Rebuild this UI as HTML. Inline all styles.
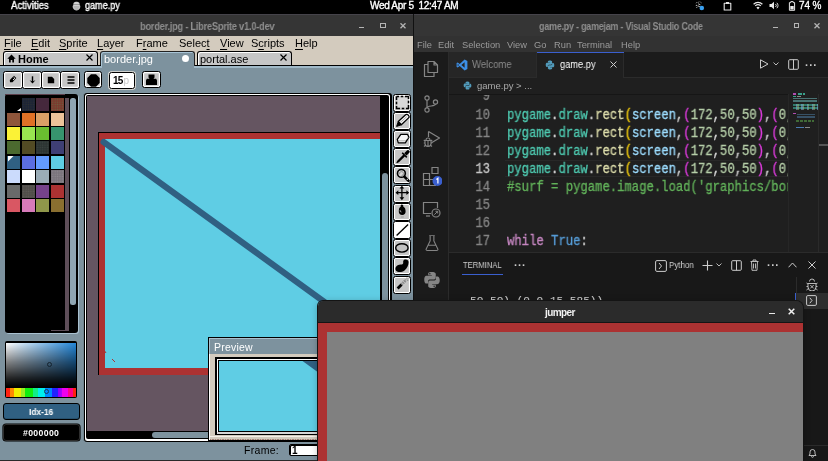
<!DOCTYPE html>
<html><head><meta charset="utf-8">
<style>
*{margin:0;padding:0;box-sizing:border-box}
html,body{width:828px;height:461px;overflow:hidden;background:#000;font-family:"Liberation Sans",sans-serif}
.a{position:absolute}
.t{position:absolute;white-space:nowrap;line-height:1;will-change:transform}
/* gnome */
#top{left:0;top:0;width:828px;height:14px;background:#000}
/* libresprite */
#ls{left:0;top:14px;width:414px;height:447px;background:#7d929e;overflow:hidden}
.hb{background:#303030}
.menu{font-size:11px;color:#000}
.tabt{font-size:11px;color:#000}
.menu u{text-decoration:underline;text-underline-offset:1.5px}
.btn{position:absolute;background:#c6c6c6;border:1px solid #000;border-bottom-width:1.8px;border-radius:2.5px;box-shadow:inset 0 0 0 1.2px #fff}
.tool{position:absolute;left:392.9px;width:18.6px;height:18px;background:#c6c6c6;border:1px solid #000;border-bottom-width:1.5px;border-radius:2.5px;box-shadow:inset 0 0 0 1.1px #fff}
/* vscode */
#vs{left:414px;top:14px;width:414px;height:447px;background:#1f1f1f;overflow:hidden}
.vm{font-size:9.3px;color:#9a9a9a;top:41px}
.code{font-family:"Liberation Mono",monospace;font-size:13px;line-height:18px;transform:scale(0.941,1.1);transform-origin:0 0;-webkit-text-stroke:0.3px currentColor}
</style></head><body>

<!-- GNOME top bar -->
<div id="top" class="a">
  <div class="t" style="left:11px;top:1px;font-size:10px;color:#fff;-webkit-text-stroke:0.35px #fff;transform:scaleX(0.955);transform-origin:0 0">Activities</div>
  <div class="t" style="left:84.8px;top:0.8px;font-size:10px;color:#fff;-webkit-text-stroke:0.35px #fff;transform:scaleX(0.91);transform-origin:0 0">game.py</div>
  <div class="t" style="left:370.4px;top:1.3px;font-size:10px;color:#fff;-webkit-text-stroke:0.35px #fff;letter-spacing:-0.32px">Wed Apr 5&nbsp;&nbsp;12:47 AM</div>

  <svg class="a" style="left:71.5px;top:1px" width="9" height="10" viewBox="0 0 9 10"><path d="M2 1.5C3 0.5 6 0.5 7 1.5C8 2.5 7.5 3.5 7.5 4C8.5 4.5 8.5 6 8 7C7.5 8.5 6 9.5 4.5 9.5C3 9.5 1.5 8.5 1 7C0.5 6 0.5 4.5 1.5 4C1.5 3.5 1 2.5 2 1.5Z" fill="#d0d0d0"/><path d="M2 3.5H7M1.5 6H7.5M2.5 8H6.5" stroke="#777" stroke-width="0.6"/></svg>
  <svg class="a" style="left:695px;top:0.5px" width="10" height="10" viewBox="0 0 10 10"><path d="M1.2 2.2L2.2 1.2M3.6 1.4L4 0.6M5.6 1.2L6.4 1.8M0.8 4.6L2 4.2M1.4 6.6L2.4 6.1M3.2 2.8L5.4 3.8M2.6 4.8L4.8 5.6" stroke="#c8c8c8" stroke-width="1"/><circle cx="6.8" cy="7" r="2.3" fill="#3aa0f0"/></svg>
  <svg class="a" style="left:722.5px;top:0.5px" width="9" height="10" viewBox="0 0 9 10"><path d="M1.2 2.3H7.8V9H1.2Z" stroke="#e6e6e6" stroke-width="1.1" fill="none" stroke-linejoin="round"/><path d="M3 1H6V3H3Z" fill="#e6e6e6"/></svg>
  <svg class="a" style="left:752.5px;top:1px" width="10" height="9" viewBox="0 0 10 9"><path d="M0.6 3.2A6.4 6.4 0 0 1 9.4 3.2M2.2 4.9A4.2 4.2 0 0 1 7.8 4.9" stroke="#e8e8e8" stroke-width="1.2" fill="none"/><path d="M5 8.6L3.4 6.5A2.2 2.2 0 0 1 6.6 6.5Z" fill="#e8e8e8"/></svg>
  <svg class="a" style="left:769px;top:1px" width="10" height="9" viewBox="0 0 10 9"><path d="M0.5 3H2.5L5 0.8V8.2L2.5 6H0.5Z" fill="#e8e8e8"/><path d="M6.5 3A2 2 0 0 1 6.5 6M7.8 1.8A3.6 3.6 0 0 1 7.8 7.2" stroke="#e8e8e8" stroke-width="0.9" fill="none"/></svg>
  <svg class="a" style="left:787.5px;top:0.5px" width="8" height="10" viewBox="0 0 8 10"><path d="M2.8 0.6H5.2V1.6H6.6V9.3H1.4V1.6H2.8Z" stroke="#e8e8e8" stroke-width="1" fill="none" stroke-linejoin="round"/><rect x="2.3" y="5" width="3.4" height="3.5" fill="#e8e8e8"/></svg>
  <div class="t" style="left:799px;top:1.2px;font-size:10px;color:#fff;letter-spacing:-0.1px;-webkit-text-stroke:0.3px #fff">74 %</div>
</div>


<!-- LibreSprite window -->
<div class="a" style="left:0;top:14px;width:413px;height:22px;background:#353535"></div>
<div class="a" style="left:0;top:14.3px;width:413px;height:1.2px;background:#45434a"></div>
<div class="t" style="left:140px;top:21px;font-size:10.6px;font-weight:bold;color:#8e8e8e;letter-spacing:-0.3px;transform:scaleX(0.88);transform-origin:0 0">border.jpg - LibreSprite v1.0-dev</div>
<div class="a" style="left:359px;top:27px;width:5px;height:1.3px;background:#b5b5b5"></div>
<div class="a" style="left:380px;top:23px;width:5.5px;height:5px;border:1.6px solid #b5b5b5"></div>
<svg class="a" style="left:400px;top:23px" width="6" height="5.5" viewBox="0 0 6 5.5"><path d="M0.5 0.3L5.5 5.2M5.5 0.3L0.5 5.2" stroke="#b5b5b5" stroke-width="1.3"/></svg>
<div class="a" style="left:413px;top:14px;width:1px;height:447px;background:#111"></div>
<div class="a" style="left:0;top:36px;width:413px;height:29px;background:#d3cbbe"></div>
<div class="t menu" style="left:3.5px;top:38.4px"><u>F</u>ile</div>
<div class="t menu" style="left:30.5px;top:38.4px"><u>E</u>dit</div>
<div class="t menu" style="left:58.5px;top:38.4px"><u>S</u>prite</div>
<div class="t menu" style="left:96.5px;top:38.4px"><u>L</u>ayer</div>
<div class="t menu" style="left:135.5px;top:38.4px">F<u>r</u>ame</div>
<div class="t menu" style="left:178.5px;top:38.4px">Selec<u>t</u></div>
<div class="t menu" style="left:219.5px;top:38.4px"><u>V</u>iew</div>
<div class="t menu" style="left:250.5px;top:38.4px">S<u>c</u>ripts</div>
<div class="t menu" style="left:294.5px;top:38.4px"><u>H</u>elp</div>
<!-- workspace -->
<div class="a" style="left:0;top:65px;width:413px;height:395px;background:#7d929e"></div>
<div class="a" style="left:0;top:460px;width:414px;height:1px;background:#2a2a2a"></div>
<!-- tabs -->
<div class="a" style="left:3px;top:51px;width:95px;height:15px;background:#c6c6c6;border:1px solid #000;border-bottom:none;border-radius:3px 3px 0 0;box-shadow:inset 1px 1px 0 #fff"></div>
<svg class="a" style="left:7px;top:54px" width="9" height="9" viewBox="0 0 9 9"><path d="M4.5 0.5L8.7 4.7H7V8.5H5.3V6H3.7V8.5H2V4.7H0.3Z" fill="#000"/></svg>
<div class="t tabt" style="left:18px;top:54px;font-weight:bold">Home</div>
<svg class="a" style="left:86px;top:54px" width="7" height="7" viewBox="0 0 7 7"><path d="M0.5 0.5L6.5 6.5M6.5 0.5L0.5 6.5" stroke="#000" stroke-width="1.2"/></svg>
<div class="a" style="left:100px;top:51px;width:95px;height:16px;background:#7d929e;border:1px solid #222;border-bottom:none;border-radius:3px 3px 0 0;box-shadow:inset 1px 1px 0 #a8c4d6"></div>
<div class="t tabt" style="left:104px;top:54px;color:#fff">border.jpg</div>
<div class="a" style="left:182px;top:55px;width:7px;height:7px;border-radius:50%;background:#fff"></div>
<div class="a" style="left:197px;top:51px;width:95px;height:15px;background:#c6c6c6;border:1px solid #000;border-bottom:none;border-radius:3px 3px 0 0;box-shadow:inset 1px 1px 0 #fff"></div>
<div class="t tabt" style="left:200px;top:54px">portal.ase</div>
<svg class="a" style="left:280px;top:54px" width="7" height="7" viewBox="0 0 7 7"><path d="M0.5 0.5L6.5 6.5M6.5 0.5L0.5 6.5" stroke="#000" stroke-width="1.2"/></svg>
<div class="a" style="left:0;top:64.8px;width:100.5px;height:1.2px;background:#000"></div>
<div class="a" style="left:194.5px;top:64.8px;width:218.5px;height:1.2px;background:#000"></div>
<div class="a" style="left:0;top:66.2px;width:101.5px;height:1.5px;background:#a0b9c8"></div>
<div class="a" style="left:193.5px;top:66.2px;width:219.5px;height:1.5px;background:#a0b9c8"></div>
<!-- toolbar buttons -->
<div class="btn" style="left:3px;top:71px;width:20px;height:18px"></div>
<div class="btn" style="left:22px;top:71px;width:20px;height:18px"></div>
<div class="btn" style="left:41px;top:71px;width:20px;height:18px"></div>
<div class="btn" style="left:60px;top:71px;width:20px;height:18px"></div>
<svg class="a" style="left:9px;top:75px" width="8" height="8" viewBox="0 0 8 8"><path d="M5 0.8L7.3 3L3.5 7.2H1L0.8 5Z" fill="#000"/><path d="M4.6 2.2L5.8 3.3L4 5" stroke="#fff" stroke-width="0.9" fill="none"/></svg>
<svg class="a" style="left:28.5px;top:76px" width="7" height="8" viewBox="0 0 7 8"><path d="M3.5 0.3V6.5" stroke="#000" stroke-width="1.4"/><path d="M0.6 4.2L3.5 7.6L6.4 4.2L3.5 5.6Z" fill="#000"/></svg>
<svg class="a" style="left:47px;top:76px" width="8" height="8" viewBox="0 0 8 8"><path d="M0.8 0.8H5L7.2 3V7.2H0.8Z" fill="#000"/></svg>
<svg class="a" style="left:67px;top:76px" width="8" height="8" viewBox="0 0 8 8"><path d="M0.5 1H7.5M0.5 4H7.5M0.5 7H7.5" stroke="#000" stroke-width="1.3"/></svg>
<div class="btn" style="left:84px;top:71px;width:18px;height:17px"></div>
<svg class="a" style="left:86.8px;top:73.5px" width="13" height="13" viewBox="0 0 13 13"><path d="M4 0.3H9L12.7 4V9L9 12.7H4L0.3 9V4Z" fill="#000"/></svg>
<div class="a" style="left:109.3px;top:72.2px;width:25.6px;height:16.4px;background:#fff;border:1.6px solid #000;border-radius:2.5px;box-shadow:0 0 0 0.8px #e8e4dc"></div>
<div class="t" style="left:112.5px;top:76.3px;font-size:10px;font-weight:bold;color:#000;letter-spacing:-0.8px">15<span style="color:#c8c8c8;font-weight:normal;margin-left:1px">p</span></div>
<div class="btn" style="left:142px;top:71px;width:19px;height:17px"></div>
<svg class="a" style="left:145px;top:74px" width="13" height="12" viewBox="0 0 13 12"><path d="M3.5 0.6H9.5V3.6L8.5 4.8H11.2L12 6.5V11H1V6.5L1.8 4.8H4.5L3.5 3.6Z" fill="#000"/></svg>
<!-- palette panel -->
<div class="a" style="left:4.5px;top:93.8px;width:73px;height:239.5px;background:#000;border-radius:3px;box-shadow:1px 1px 0 #a9c1d0"></div>
<div class="a" style="left:4.5px;top:93.8px;width:60px;height:1px;background:#5b3f4b"></div>
<div class="a" style="left:7.0px;top:98.0px;width:13.2px;height:13.2px;background:#000000"></div>
<div class="a" style="left:22.0px;top:98.0px;width:13.2px;height:13.2px;background:#1c2436 radial-gradient(circle, #2e3030 0.5px, transparent 0.9px) 0.6px 0.6px/2.4px 2.4px"></div>
<div class="a" style="left:36.3px;top:98.0px;width:13.2px;height:13.2px;background:#45283c"></div>
<div class="a" style="left:50.8px;top:98.0px;width:13.2px;height:13.2px;background:#7c3a2e radial-gradient(circle, #6a6040 0.5px, transparent 0.9px) 0.6px 0.6px/2.4px 2.4px"></div>
<div class="a" style="left:7.0px;top:112.5px;width:13.2px;height:13.2px;background:#8f563b"></div>
<div class="a" style="left:22.0px;top:112.5px;width:13.2px;height:13.2px;background:#df7126"></div>
<div class="a" style="left:36.3px;top:112.5px;width:13.2px;height:13.2px;background:#d9a066"></div>
<div class="a" style="left:50.8px;top:112.5px;width:13.2px;height:13.2px;background:#eec39a"></div>
<div class="a" style="left:7.0px;top:126.9px;width:13.2px;height:13.2px;background:#fbf236"></div>
<div class="a" style="left:22.0px;top:126.9px;width:13.2px;height:13.2px;background:#99e550"></div>
<div class="a" style="left:36.3px;top:126.9px;width:13.2px;height:13.2px;background:#6abe30"></div>
<div class="a" style="left:50.8px;top:126.9px;width:13.2px;height:13.2px;background:#37946e"></div>
<div class="a" style="left:7.0px;top:141.3px;width:13.2px;height:13.2px;background:#4b692f"></div>
<div class="a" style="left:22.0px;top:141.3px;width:13.2px;height:13.2px;background:#524b24"></div>
<div class="a" style="left:36.3px;top:141.3px;width:13.2px;height:13.2px;background:#2c3432 radial-gradient(circle, #3c4442 0.5px, transparent 0.9px) 0.6px 0.6px/2.4px 2.4px"></div>
<div class="a" style="left:50.8px;top:141.3px;width:13.2px;height:13.2px;background:#3f3f74"></div>
<div class="a" style="left:7.0px;top:155.8px;width:13.2px;height:13.2px;background:#306082"></div>
<div class="a" style="left:22.0px;top:155.8px;width:13.2px;height:13.2px;background:#5b6ee1"></div>
<div class="a" style="left:36.3px;top:155.8px;width:13.2px;height:13.2px;background:#639bff"></div>
<div class="a" style="left:50.8px;top:155.8px;width:13.2px;height:13.2px;background:#5fcde4"></div>
<div class="a" style="left:7.0px;top:170.2px;width:13.2px;height:13.2px;background:#cbdbfc"></div>
<div class="a" style="left:22.0px;top:170.2px;width:13.2px;height:13.2px;background:#ffffff"></div>
<div class="a" style="left:36.3px;top:170.2px;width:13.2px;height:13.2px;background:#9badb7"></div>
<div class="a" style="left:50.8px;top:170.2px;width:13.2px;height:13.2px;background:#7a747c radial-gradient(circle, #8e8990 0.5px, transparent 0.9px) 0.6px 0.6px/2.4px 2.4px"></div>
<div class="a" style="left:7.0px;top:184.7px;width:13.2px;height:13.2px;background:#696a6a"></div>
<div class="a" style="left:22.0px;top:184.7px;width:13.2px;height:13.2px;background:#504d49 radial-gradient(circle, #605d59 0.5px, transparent 0.9px) 0.6px 0.6px/2.4px 2.4px"></div>
<div class="a" style="left:36.3px;top:184.7px;width:13.2px;height:13.2px;background:#76428a"></div>
<div class="a" style="left:50.8px;top:184.7px;width:13.2px;height:13.2px;background:#ac3232"></div>
<div class="a" style="left:7.0px;top:199.1px;width:13.2px;height:13.2px;background:#d95763"></div>
<div class="a" style="left:22.0px;top:199.1px;width:13.2px;height:13.2px;background:#d77bba"></div>
<div class="a" style="left:36.3px;top:199.1px;width:13.2px;height:13.2px;background:#8f974a"></div>
<div class="a" style="left:50.8px;top:199.1px;width:13.2px;height:13.2px;background:#8a6f30"></div>
<div class="a" style="left:17px;top:108px;width:4px;height:3px;background:#fff;clip-path:polygon(100% 0,100% 100%,0 100%)"></div>
<div class="a" style="left:7.5px;top:156px;width:6px;height:6px;background:#fff;clip-path:polygon(0 0,100% 0,0 100%)"></div>
<div class="a" style="left:65.3px;top:98px;width:3.4px;height:233.4px;background:#5e4e59"></div>
<div class="a" style="left:51px;top:329.6px;width:17.7px;height:1.8px;background:#5e4e59"></div>
<div class="a" style="left:70.2px;top:97.8px;width:6px;height:207px;background:#8fa5b2;border-radius:2.5px"></div>
<!-- color picker -->
<div class="a" style="left:4.5px;top:341px;width:72.5px;height:57px;background:#000;border-radius:2px"></div>
<div class="a" style="left:6px;top:342.5px;width:70px;height:44.5px;background:linear-gradient(to bottom, rgba(0,0,0,0) 0%, rgba(0,0,0,.5) 45%, rgba(0,0,0,.85) 80%, #000 100%), linear-gradient(to right, #fff, #2386d8)"></div>
<div class="a" style="left:6px;top:387.5px;width:70px;height:9.5px;background:linear-gradient(to right,#f21 0%,#f21 6%,#f80 6%,#f80 12%,#ee0 12%,#ee0 22%,#9e2 22%,#9e2 27%,#1e1 27%,#1e1 38%,#1e8 38%,#1e8 46%,#0ee 46%,#0ee 56%,#08f 56%,#08f 66%,#22f 66%,#22f 74%,#80f 74%,#a0f 80%,#e0e 80%,#e0e 88%,#f08 88%,#f08 96%,#f21 96%)"></div>
<div class="a" style="left:46.8px;top:361.6px;width:5px;height:5px;border:1px solid #15232e;border-radius:50%"></div>
<div class="a" style="left:43.5px;top:389px;width:5px;height:5px;border:1.2px solid #1a3a5a;border-radius:50%"></div>
<!-- idx / hex -->
<div class="a" style="left:3px;top:403px;width:76.5px;height:16.5px;background:#306082;border:1.3px solid #000;border-radius:3px;box-shadow:inset 0 -1px 0 #26506d"></div>
<div class="t" style="left:28.8px;top:408.3px;font-size:9px;font-weight:bold;color:#fff;letter-spacing:0px;transform:scaleX(0.93);transform-origin:0 0">Idx-16</div>
<div class="a" style="left:3px;top:424px;width:76.5px;height:17px;background:#000;border:1.3px solid #2e2e2e;border-radius:3px;box-shadow:0 0 0 0.6px #000"></div>
<div class="t" style="left:23px;top:429px;font-size:8.7px;font-weight:bold;color:#fff;letter-spacing:0.35px">#000000</div>
<div class="a" style="left:82.5px;top:94px;width:1px;height:347px;background:#71858f"></div>
<!-- canvas editor -->
<div class="a" style="left:84px;top:93px;width:307.5px;height:349px;background:#000;border-radius:3px"></div>
<div class="a" style="left:85px;top:94px;width:305.3px;height:347px;background:#fff;border-radius:2.5px"></div>
<div class="a" style="left:86.3px;top:95px;width:302.7px;height:344px;background:#000;border-radius:2px"></div>
<div class="a" style="left:87.4px;top:96.4px;width:293px;height:334.5px;background:#655561"></div>
<div class="a" style="left:382px;top:173px;width:6px;height:300px;background:#7d929e;border-radius:3px"></div>
<div class="a" style="left:151.5px;top:432.4px;width:240px;height:6px;background:#7d929e;border-radius:3px"></div>
<!-- sprite -->
<div class="a" style="left:87.4px;top:96.4px;width:293px;height:334.5px;overflow:hidden">
<div class="a" style="left:10.6px;top:35.6px;width:300px;height:243px;background:#000"></div>
<div class="a" style="left:11.6px;top:36.6px;width:300px;height:242px;background:#ac3232"></div>
<div class="a" style="left:17.6px;top:42.6px;width:290px;height:229px;background:#5fcde4"></div>
<svg class="a" style="left:-87.4px;top:-96.4px" width="413" height="461" viewBox="0 0 413 461"><path d="M103.6 142L330 306" stroke="#306082" stroke-width="6.2" stroke-linecap="round"/><path d="M104 350L106 353M112 359L115 362" stroke="#ac3232" stroke-width="1"/></svg>
</div>
<div class="tool" style="top:93.5px;background:#c6c6c6"></div>
<div class="tool" style="top:111.7px;background:#c6c6c6"></div>
<div class="tool" style="top:129.9px;background:#c6c6c6"></div>
<div class="tool" style="top:148.1px;background:#c6c6c6"></div>
<div class="tool" style="top:166.3px;background:#c6c6c6"></div>
<div class="tool" style="top:184.5px;background:#c6c6c6"></div>
<div class="tool" style="top:202.7px;background:#c6c6c6"></div>
<div class="tool" style="top:220.9px;background:#fff"></div>
<div class="tool" style="top:239.1px;background:#c6c6c6"></div>
<div class="tool" style="top:257.3px;background:#c6c6c6"></div>
<div class="tool" style="top:275.5px;background:#c6c6c6"></div>
<svg class="a" style="left:0;top:0" width="413" height="300" viewBox="0 0 413 300">
<!-- marquee -->
<rect x="397.5" y="97.5" width="10" height="10" fill="#d9d9d9"/>
<path d="M396.5 96.5H399M400.8 96.5H403.2M405 96.5H408.5V99M408.5 100.8V103.2M408.5 105V108.5H406M404.2 108.5H401.8M400 108.5H396.5V106M396.5 104.2V101.8M396.5 100V96.5" stroke="#000" stroke-width="1.5" fill="none"/>
<!-- pencil -->
<path d="M398.3 121.6L405.6 114.8A1.6 1.6 0 0 1 407.9 114.9L408.6 115.6A1.6 1.6 0 0 1 408.6 117.9L401.3 124.8Z" fill="#f4f4f4" stroke="#000" stroke-width="1.3" stroke-linejoin="round"/>
<path d="M398.3 121.6L401.3 124.8L396.6 126.4Z" fill="#000" stroke="#000" stroke-width="1" stroke-linejoin="round"/>
<path d="M400.2 122.6L406.8 116.6" stroke="#9a9a9a" stroke-width="0.8"/>
<!-- eraser -->
<path d="M397.3 139.3L400.8 134.4H407.6L408.9 137.2L405.3 142.9H398.3Z" fill="#f6f6f6" stroke="#000" stroke-width="1.3" stroke-linejoin="round"/>
<path d="M398.5 140.8H405.3L408.5 137.5" stroke="#a0a0a0" stroke-width="0.8" fill="none"/>
<!-- eyedropper -->
<path d="M404.2 153.2L407 150.5A1.4 1.4 0 0 1 409 150.5L409.3 150.8A1.4 1.4 0 0 1 409.3 152.8L406.5 155.5Z" fill="#000"/>
<path d="M402.2 152.8L406.8 157.4" stroke="#000" stroke-width="1.5"/>
<path d="M403.6 155.2L398.2 160.6L397 162.6L399 161.4L404.4 156Z" fill="#f0f0f0" stroke="#000" stroke-width="1.2" stroke-linejoin="round"/>
<!-- zoom -->
<circle cx="401.4" cy="173.4" r="3.9" fill="#d8d8d8" stroke="#000" stroke-width="1.6"/>
<path d="M399.6 174.2A2 2 0 1 1 401.6 175.6" stroke="#888" stroke-width="0.9" fill="none"/>
<path d="M404.4 176.6L408.6 180.8" stroke="#000" stroke-width="2.6" stroke-linecap="round"/>
<circle cx="407.3" cy="179.3" r="0.6" fill="#fff"/>
<!-- move -->
<path d="M401.9 187.5V198.5M396.8 192.7H407.8" stroke="#000" stroke-width="1.3"/>
<path d="M401.9 185.8L404.3 188.6H399.5ZM401.9 200.2L404.3 197.2H399.5ZM395.5 192.7L398.3 190.3V195.1ZM409.2 192.7L406.4 190.3V195.1Z" fill="#000"/>
<!-- bucket -->
<path d="M401.8 204.6C400.7 204.6 400.4 205.6 400.8 206.6C399 207.5 398.8 209.6 398.8 211.5C398.8 213.8 400 215 402.2 215C404.4 215 405.6 213.8 405.6 211.5C405.6 209.6 405.2 207.5 403.2 206.6C403.6 205.6 403 204.6 401.8 204.6Z" fill="#000"/>
<path d="M400.3 210.2A1.2 1.2 0 0 0 401.4 212" stroke="#fff" stroke-width="0.7" fill="none"/>
<path d="M400.8 217H403.8" stroke="#8a8a8a" stroke-width="0.7"/>
<!-- line -->
<path d="M396.6 235.4L408.1 224.5" stroke="#000" stroke-width="1.4"/>
<!-- ellipse -->
<ellipse cx="401.9" cy="247.9" rx="6.2" ry="4.2" fill="#c2c2c2" stroke="#000" stroke-width="1.4"/>
<!-- blob -->
<path d="M405 259.6C406.8 259.2 408.6 260.2 408.6 262.2C408.6 265 407 268.5 404.5 270.5C402.5 272 399.8 272.4 397.6 271.8C395.4 271.2 395 269.4 395.6 267.6C396.4 265.6 398.5 264.8 400.8 264.6C402.6 264.4 403.4 263.6 403.2 262.2C403 260.8 403.6 259.9 405 259.6Z" fill="#000"/>
<!-- spray -->
<path d="M396.6 287.4L400.6 283.4L402.6 285.4L398.6 289.4Z" fill="#000"/>
<path d="M400.6 283.4L404.4 279.6L406.4 281.6L402.6 285.4Z" fill="#8e8e8e"/>
<path d="M401.6 282.4L404.4 285.2M403 281L405.4 283.4" stroke="#d8d8d8" stroke-width="0.6"/>
<path d="M406.6 278H407.4M408.6 278H409.4M407.4 280.2H408.2M405.6 279.8H406.2" stroke="#222" stroke-width="0.7"/>
</svg>
<!-- preview window -->
<div class="a" style="left:207.5px;top:337px;width:120px;height:104px;background:#000"></div>
<div class="a" style="left:208.6px;top:338px;width:120px;height:101.5px;background:#d3cbbe;box-shadow:inset 1px 0 0 #fff"></div>
<div class="a" style="left:208.6px;top:338px;width:120px;height:15.5px;background:#7d929e;box-shadow:inset 1px 1px 0 #a9c1cf"></div>
<div class="t" style="left:214px;top:341.5px;font-size:10.5px;color:#fff;letter-spacing:0.2px">Preview</div>
<div class="a" style="left:209.5px;top:438.5px;width:120px;height:1.3px;background:repeating-linear-gradient(to right,#a08078 0 1.5px,#c8b8a8 1.5px 2.5px)"></div>
<div class="a" style="left:209.5px;top:435.5px;width:120px;height:1.2px;background:#f4f0ea"></div>
<div class="a" style="left:215.2px;top:357.4px;width:120px;height:77.8px;background:#000"></div>
<div class="a" style="left:216.5px;top:358.5px;width:120px;height:75.5px;background:#fff"></div>
<div class="a" style="left:218px;top:360px;width:120px;height:72px;background:#000"></div>
<div class="a" style="left:218.5px;top:360.9px;width:120px;height:70.2px;background:#5fcde4;overflow:hidden"><svg class="a" style="left:0;top:0" width="120" height="70"><path d="M83.5 0H120V26.5Z" fill="#306082"/></svg></div>
<div class="a" style="left:216.5px;top:432px;width:120px;height:2px;background:#d6d6d6"></div>
<!-- status -->
<div class="t" style="left:244px;top:444.5px;font-size:10.5px;color:#000;letter-spacing:0.3px">Frame:</div>
<div class="a" style="left:288.5px;top:444.3px;width:40px;height:12px;background:#fff;border:1.2px solid #000;border-radius:2px;box-shadow:inset 1px 1px 0 #000"></div>
<div class="t" style="left:291.8px;top:445.8px;font-size:10px;font-weight:bold;color:#000">1</div>
<div class="a" style="left:380.4px;top:96.4px;width:0;height:0"></div>

<!-- VS Code window -->
<div class="a" style="left:414px;top:14px;width:414px;height:22px;background:#353535"></div>
<div class="a" style="left:414px;top:14.3px;width:414px;height:1.2px;background:#45434a"></div>
<div class="t" style="left:539px;top:21px;font-size:10.6px;font-weight:bold;color:#8e8e8e;letter-spacing:-0.3px;transform:scaleX(0.85);transform-origin:0 0">game.py - gamejam - Visual Studio Code</div>
<div class="a" style="left:773px;top:27px;width:5px;height:1.3px;background:#b5b5b5"></div>
<div class="a" style="left:793.5px;top:23px;width:5.5px;height:5px;border:1.6px solid #b5b5b5"></div>
<svg class="a" style="left:814px;top:23px" width="6" height="5.5" viewBox="0 0 6 5.5"><path d="M0.5 0.3L5.5 5.2M5.5 0.3L0.5 5.2" stroke="#b5b5b5" stroke-width="1.3"/></svg>
<div class="a" style="left:414px;top:36px;width:414px;height:16px;background:#323232"></div>
<div class="t vm" style="left:416.8px">File</div>
<div class="t vm" style="left:438.3px">Edit</div>
<div class="t vm" style="left:461.8px">Selection</div>
<div class="t vm" style="left:506.8px">View</div>
<div class="t vm" style="left:533.8px">Go</div>
<div class="t vm" style="left:553.8px">Run</div>
<div class="t vm" style="left:576.8px">Terminal</div>
<div class="t vm" style="left:620.8px">Help</div>
<!-- body -->
<div class="a" style="left:414px;top:52px;width:414px;height:409px;background:#1f1f1f"></div>
<div class="a" style="left:414px;top:52px;width:34px;height:409px;background:#1b1b1b"></div>
<div class="a" style="left:447.5px;top:52px;width:1px;height:409px;background:#2b2b2b"></div>
<!-- tabs -->
<div class="a" style="left:448.5px;top:52px;width:380px;height:25px;background:#1b1b1b"></div>
<div class="a" style="left:448.5px;top:76.5px;width:380px;height:1px;background:#2b2b2b"></div>
<div class="a" style="left:448.5px;top:52px;width:88px;height:25px;background:#262626;border-right:1px solid #2b2b2b"></div>
<div class="a" style="left:536.5px;top:52px;width:87px;height:25.5px;background:#1f1f1f;border-right:1px solid #2b2b2b"></div>
<div class="a" style="left:536.5px;top:52px;width:87px;height:1px;background:#3a5fcf"></div>
<svg class="a" style="left:456px;top:59px" width="12" height="12" viewBox="0 0 12 12"><path d="M8.6 0.6L11.4 1.9V10.1L8.6 11.4L3.7 7L1.7 8.5L0.6 8V4L1.7 3.5L3.7 5Z M8.6 3.3L5.4 6L8.6 8.7Z M1.7 4.8V7.2L3 6Z" fill="#3d8fe6" fill-rule="evenodd"/></svg>
<div class="t" style="left:472px;top:60.3px;font-size:10.2px;color:#8b8b8b;transform:scaleX(0.94);transform-origin:0 0">Welcome</div>
<svg class="a" style="left:545px;top:59.5px" width="10" height="10" viewBox="0 0 10 10"><path d="M4.8 0.5C2.8 0.5 2.9 1.4 2.9 1.4V2.4H4.9V2.7H2.1C2.1 2.7 0.7 2.5 0.7 4.8C0.7 7 1.9 7 1.9 7H2.8V5.9C2.8 5.9 2.7 4.7 4 4.7H6C6 4.7 7.1 4.7 7.1 3.6V1.7C7.1 1.7 7.3 0.5 4.8 0.5Z" fill="#519aba"/><path d="M5.2 9.5C7.2 9.5 7.1 8.6 7.1 8.6V7.6H5.1V7.3H7.9C7.9 7.3 9.3 7.5 9.3 5.2C9.3 3 8.1 3 8.1 3H7.2V4.1C7.2 4.1 7.3 5.3 6 5.3H4C4 5.3 2.9 5.3 2.9 6.4V8.3C2.9 8.3 2.7 9.5 5.2 9.5Z" fill="#519aba"/></svg>
<div class="t" style="left:559.5px;top:60.3px;font-size:10.2px;color:#ffffff;transform:scaleX(0.91);transform-origin:0 0">game.py</div>
<svg class="a" style="left:609.5px;top:61px" width="7" height="7" viewBox="0 0 7 7"><path d="M0.5 0.5L6.5 6.5M6.5 0.5L0.5 6.5" stroke="#cccccc" stroke-width="1"/></svg>
<!-- editor actions -->
<svg class="a" style="left:759px;top:59px" width="10" height="10" viewBox="0 0 10 10"><path d="M1.5 0.8L9 5L1.5 9.2Z" stroke="#cccccc" stroke-width="1" fill="none"/></svg>
<svg class="a" style="left:773px;top:62px" width="6" height="4" viewBox="0 0 6 4"><path d="M0.5 0.5L3 3L5.5 0.5" stroke="#cccccc" stroke-width="0.9" fill="none"/></svg>
<svg class="a" style="left:787.5px;top:59px" width="11" height="11" viewBox="0 0 11 11"><rect x="0.7" y="0.7" width="9.6" height="9.6" rx="1" stroke="#cccccc" stroke-width="1" fill="none"/><path d="M5.5 0.7V10.3" stroke="#cccccc" stroke-width="1"/></svg>
<div class="t" style="left:805px;top:59.5px;font-size:11px;color:#cccccc;letter-spacing:0.5px;font-weight:bold">&middot;&middot;&middot;</div>
<!-- breadcrumb -->
<svg class="a" style="left:463px;top:80.5px" width="9" height="9" viewBox="0 0 10 10"><path d="M4.8 0.5C2.8 0.5 2.9 1.4 2.9 1.4V2.4H4.9V2.7H2.1C2.1 2.7 0.7 2.5 0.7 4.8C0.7 7 1.9 7 1.9 7H2.8V5.9C2.8 5.9 2.7 4.7 4 4.7H6C6 4.7 7.1 4.7 7.1 3.6V1.7C7.1 1.7 7.3 0.5 4.8 0.5Z" fill="#519aba"/><path d="M5.2 9.5C7.2 9.5 7.1 8.6 7.1 8.6V7.6H5.1V7.3H7.9C7.9 7.3 9.3 7.5 9.3 5.2C9.3 3 8.1 3 8.1 3H7.2V4.1C7.2 4.1 7.3 5.3 6 5.3H4C4 5.3 2.9 5.3 2.9 6.4V8.3C2.9 8.3 2.7 9.5 5.2 9.5Z" fill="#519aba"/></svg>
<div class="t" style="left:476.5px;top:81px;font-size:9.5px;color:#a9a9a9">game.py&nbsp;&gt;&nbsp;...</div>
<!-- code -->
<div class="a" style="left:448.5px;top:94px;width:339px;height:158px;overflow:hidden">
<div class="a" style="left:-448.5px;top:-94px;width:828px;height:461px">
<div class="a" style="left:505px;top:159.5px;width:283px;height:17px;border-top:1px solid #282828;border-bottom:1px solid #282828"></div>
<div class="t code" style="left:469.5px;top:87.4px;width:20px;text-align:right;transform-origin:100% 0;color:#858585">9</div>
<div class="t code" style="left:469.5px;top:105.5px;width:20px;text-align:right;transform-origin:100% 0;color:#858585">10</div><div class="t code" style="left:507.3px;top:105.5px"><span style="color:#4ec9b0">pygame</span><span style="color:#d4d4d4">.</span><span style="color:#4ec9b0">draw</span><span style="color:#d4d4d4">.</span><span style="color:#dcdcaa">rect</span><span style="color:#ffd60a">(</span><span style="color:#9cdcfe">screen</span><span style="color:#d4d4d4">,</span><span style="color:#e23ce2">(</span><span style="color:#b5cea8">172</span><span style="color:#d4d4d4">,</span><span style="color:#b5cea8">50</span><span style="color:#d4d4d4">,</span><span style="color:#b5cea8">50</span><span style="color:#e23ce2">)</span><span style="color:#d4d4d4">,</span><span style="color:#e23ce2">(</span><span style="color:#b5cea8">0</span><span style="color:#b5cea8">,0,0),(0,0,</span></div>
<div class="t code" style="left:469.5px;top:123.5px;width:20px;text-align:right;transform-origin:100% 0;color:#858585">11</div><div class="t code" style="left:507.3px;top:123.5px"><span style="color:#4ec9b0">pygame</span><span style="color:#d4d4d4">.</span><span style="color:#4ec9b0">draw</span><span style="color:#d4d4d4">.</span><span style="color:#dcdcaa">rect</span><span style="color:#ffd60a">(</span><span style="color:#9cdcfe">screen</span><span style="color:#d4d4d4">,</span><span style="color:#e23ce2">(</span><span style="color:#b5cea8">172</span><span style="color:#d4d4d4">,</span><span style="color:#b5cea8">50</span><span style="color:#d4d4d4">,</span><span style="color:#b5cea8">50</span><span style="color:#e23ce2">)</span><span style="color:#d4d4d4">,</span><span style="color:#e23ce2">(</span><span style="color:#b5cea8">0</span><span style="color:#b5cea8">,0,0),(0,0,</span></div>
<div class="t code" style="left:469.5px;top:141.6px;width:20px;text-align:right;transform-origin:100% 0;color:#858585">12</div><div class="t code" style="left:507.3px;top:141.6px"><span style="color:#4ec9b0">pygame</span><span style="color:#d4d4d4">.</span><span style="color:#4ec9b0">draw</span><span style="color:#d4d4d4">.</span><span style="color:#dcdcaa">rect</span><span style="color:#ffd60a">(</span><span style="color:#9cdcfe">screen</span><span style="color:#d4d4d4">,</span><span style="color:#e23ce2">(</span><span style="color:#b5cea8">172</span><span style="color:#d4d4d4">,</span><span style="color:#b5cea8">50</span><span style="color:#d4d4d4">,</span><span style="color:#b5cea8">50</span><span style="color:#e23ce2">)</span><span style="color:#d4d4d4">,</span><span style="color:#e23ce2">(</span><span style="color:#b5cea8">0</span><span style="color:#b5cea8">,0,0),(0,0,</span></div>
<div class="t code" style="left:469.5px;top:159.7px;width:20px;text-align:right;transform-origin:100% 0;color:#c6c6c6">13</div><div class="t code" style="left:507.3px;top:159.7px"><span style="color:#4ec9b0">pygame</span><span style="color:#d4d4d4">.</span><span style="color:#4ec9b0">draw</span><span style="color:#d4d4d4">.</span><span style="color:#dcdcaa">rect</span><span style="color:#ffd60a">(</span><span style="color:#9cdcfe">screen</span><span style="color:#d4d4d4">,</span><span style="color:#e23ce2">(</span><span style="color:#b5cea8">172</span><span style="color:#d4d4d4">,</span><span style="color:#b5cea8">50</span><span style="color:#d4d4d4">,</span><span style="color:#b5cea8">50</span><span style="color:#e23ce2">)</span><span style="color:#d4d4d4">,</span><span style="color:#e23ce2">(</span><span style="color:#b5cea8">0</span><span style="color:#b5cea8">,0,0),(0,0,</span></div>
<div class="t code" style="left:469.5px;top:177.7px;width:20px;text-align:right;transform-origin:100% 0;color:#858585">14</div><div class="t code" style="left:507.3px;top:177.7px"><span style="color:#62b25a">#surf = pygame.image.load('graphics/border.jpg')</span></div>
<div class="t code" style="left:469.5px;top:195.8px;width:20px;text-align:right;transform-origin:100% 0;color:#858585">15</div>
<div class="t code" style="left:469.5px;top:213.9px;width:20px;text-align:right;transform-origin:100% 0;color:#858585">16</div>
<div class="t code" style="left:469.5px;top:232.0px;width:20px;text-align:right;transform-origin:100% 0;color:#858585">17</div><div class="t code" style="left:507.3px;top:232.0px"><span style="color:#c586c0">while</span><span style="color:#d4d4d4"> </span><span style="color:#569cd6">True</span><span style="color:#d4d4d4">:</span></div>
</div></div>
<div class="a" style="left:448.5px;top:93.5px;width:339px;height:1px;background:#161616"></div>
<!-- minimap -->
<div class="a" style="left:787.5px;top:94px;width:1px;height:158px;background:#262626"></div>
<div class="a" style="left:817.8px;top:94px;width:10.2px;height:158px;background:#1f1f1f;border-left:1px solid #2a2a2a"></div>
<div class="a" style="left:818.5px;top:143.8px;width:9.5px;height:1.8px;background:#555"></div>
<div class="a" style="left:793.4px;top:93.4px;width:3px;height:1.3px;background:#b04cb0"></div>
<div class="a" style="left:797.5px;top:93.4px;width:4px;height:1.3px;background:#3aa08a"></div>
<div class="a" style="left:802.5px;top:93.4px;width:2px;height:1.3px;background:#3aa08a"></div>
<div class="a" style="left:793.4px;top:95.6px;width:3px;height:1.2px;background:#3aa08a"></div>
<div class="a" style="left:797px;top:95.6px;width:4px;height:1.2px;background:#888"></div>
<div class="a" style="left:793.4px;top:98px;width:24px;height:4.8px;background:repeating-linear-gradient(to bottom,rgba(90,150,150,.7) 0 1.2px,transparent 1.2px 1.6px)"></div>
<div class="a" style="left:793.4px;top:104px;width:24.2px;height:5.6px;background:repeating-linear-gradient(to bottom,rgba(58,160,138,.7) 0 1.1px,transparent 1.1px 1.4px)"></div>
<div class="a" style="left:793.4px;top:104px;width:24.2px;height:5.6px;background:repeating-linear-gradient(to right,transparent 0 2.5px,rgba(120,170,210,.6) 2.5px 4px,rgba(160,190,140,.5) 4px 5.5px);"></div>
<div class="a" style="left:793px;top:112.9px;width:3px;height:1.2px;background:#b04cb0"></div>
<div class="a" style="left:796.5px;top:113.5px;width:18px;height:4px;background:repeating-linear-gradient(to bottom,rgba(74,122,160,.55) 0 1.1px,transparent 1.1px 1.6px)"></div>
<div class="a" style="left:796px;top:119.8px;width:18px;height:2.4px;background:repeating-linear-gradient(to right,rgba(79,138,64,.7) 0 3px,transparent 3px 4px)"></div>
<div class="a" style="left:796px;top:126.6px;width:8px;height:1.6px;background:#4a7ab0"></div>
<div class="a" style="left:805px;top:126.6px;width:5px;height:1.2px;background:#888"></div>
<!-- panel -->
<div class="a" style="left:448.5px;top:251.5px;width:380px;height:1px;background:#2b2b2b"></div>
<div class="a" style="left:448.5px;top:252.5px;width:380px;height:209px;background:#181818"></div>
<div class="t" style="left:463px;top:260.5px;font-size:9px;color:#cccccc;transform:scaleX(0.85);transform-origin:0 0">TERMINAL</div>
<div class="a" style="left:462px;top:273.5px;width:41px;height:1px;background:#3a5fcf"></div>
<div class="t" style="left:513.5px;top:259.5px;font-size:11px;color:#cccccc;letter-spacing:0.3px;font-weight:bold">&middot;&middot;&middot;</div>
<svg class="a" style="left:654.5px;top:259.5px" width="12" height="12" viewBox="0 0 12 12"><rect x="0.6" y="0.6" width="10.8" height="10.8" rx="1.3" stroke="#cccccc" stroke-width="1" fill="none"/><path d="M4 3L6.5 6L4 9" stroke="#cccccc" stroke-width="1" fill="none"/></svg>
<div class="t" style="left:669px;top:260.5px;font-size:9.3px;color:#cccccc;transform:scaleX(0.86);transform-origin:0 0">Python</div>
<svg class="a" style="left:701.5px;top:259.5px" width="11" height="11" viewBox="0 0 11 11"><path d="M5.5 0.5V10.5M0.5 5.5H10.5" stroke="#cccccc" stroke-width="1.1"/></svg>
<svg class="a" style="left:715.5px;top:262.5px" width="6" height="4" viewBox="0 0 6 4"><path d="M0.5 0.5L3 3L5.5 0.5" stroke="#cccccc" stroke-width="0.9" fill="none"/></svg>
<svg class="a" style="left:731px;top:259.5px" width="11" height="11" viewBox="0 0 11 11"><rect x="0.7" y="0.7" width="9.6" height="9.6" rx="1" stroke="#cccccc" stroke-width="1" fill="none"/><path d="M5.5 0.7V10.3" stroke="#cccccc" stroke-width="1"/></svg>
<svg class="a" style="left:750px;top:259px" width="9" height="12" viewBox="0 0 9 12"><path d="M0.5 2.5H8.5M3 2.5V1H6V2.5M1.5 2.5L2 11.3H7L7.5 2.5M3.5 4.5V9.5M5.5 4.5V9.5" stroke="#cccccc" stroke-width="0.9" fill="none"/></svg>
<div class="t" style="left:767px;top:259.5px;font-size:11px;color:#cccccc;letter-spacing:0.5px;font-weight:bold">&middot;&middot;&middot;</div>
<svg class="a" style="left:788px;top:261.5px" width="9" height="6" viewBox="0 0 9 6"><path d="M0.5 5.3L4.5 1L8.5 5.3" stroke="#cccccc" stroke-width="1" fill="none"/></svg>
<svg class="a" style="left:807.5px;top:261px" width="8" height="8" viewBox="0 0 8 8"><path d="M0.5 0.5L7.5 7.5M7.5 0.5L0.5 7.5" stroke="#cccccc" stroke-width="1"/></svg>
<div class="a" style="left:795.5px;top:277px;width:1px;height:168px;background:#2b2b2b"></div>
<div class="a" style="left:796.5px;top:293px;width:32px;height:15.5px;background:#2e2e2e"></div>
<div class="a" style="left:795.3px;top:293px;width:1.1px;height:15.5px;background:#3a5fcf"></div>
<svg class="a" style="left:805.5px;top:278px" width="12" height="13" viewBox="0 0 12 13"><path d="M3.5 3.5A2.5 2.5 0 0 1 8.5 3.5M2 5.5H10V9A4 4 0 0 1 2 9ZM0.5 5L2 6M11.5 5L10 6M0.5 8.5H2M10 8.5H11.5M0.5 12L2.3 10.5M11.5 12L9.7 10.5M4.3 7L7.7 10.4M7.7 7L4.3 10.4" stroke="#cccccc" stroke-width="0.9" fill="none"/></svg>
<svg class="a" style="left:806px;top:295px" width="11" height="11" viewBox="0 0 11 11"><rect x="0.6" y="0.6" width="9.8" height="9.8" rx="1.2" stroke="#cccccc" stroke-width="1" fill="none"/><path d="M3.8 2.8L6 5.5L3.8 8.2" stroke="#cccccc" stroke-width="1" fill="none"/></svg>
<div class="t code" style="left:469.5px;top:291.8px;font-size:11.1px;color:#cccccc;transform:none;-webkit-text-stroke:0.1px currentColor">50,50),(0,0,15,585))</div>
<!-- status bar -->
<div class="a" style="left:414px;top:445px;width:414px;height:1px;background:#2b2b2b"></div>
<div class="a" style="left:414px;top:446px;width:414px;height:15px;background:#181818"></div>
<svg class="a" style="left:807.5px;top:448px" width="9" height="10" viewBox="0 0 9 10"><path d="M1 7.5H8L7 6V4A2.5 2.5 0 0 0 2 4V6Z M3.5 8.3A1 1 0 0 0 5.5 8.3" stroke="#cccccc" stroke-width="0.9" fill="none"/></svg>
<!-- activity bar icons -->
<svg class="a" style="left:422px;top:59.5px" width="18" height="18" viewBox="0 0 18 18"><path d="M6 1.5H12L15.5 5V12.5H6Z M12 1.5V5H15.5" stroke="#858585" stroke-width="1.2" fill="none" stroke-linejoin="round"/><path d="M6 4.5H2.5V16.5H12V12.5" stroke="#858585" stroke-width="1.2" fill="none" stroke-linejoin="round"/></svg>
<svg class="a" style="left:423px;top:95px" width="16" height="18" viewBox="0 0 16 18"><circle cx="4" cy="3" r="2.1" stroke="#858585" stroke-width="1.2" fill="none"/><circle cx="4" cy="15" r="2.1" stroke="#858585" stroke-width="1.2" fill="none"/><circle cx="12.5" cy="7" r="2.1" stroke="#858585" stroke-width="1.2" fill="none"/><path d="M4 5.1V12.9M12.5 9.1C12.5 12 4 10 4 12.9" stroke="#858585" stroke-width="1.2" fill="none"/></svg>
<svg class="a" style="left:423px;top:130px" width="18" height="18" viewBox="0 0 18 18"><path d="M5.5 1.5L16.5 8L8.5 12.7" stroke="#858585" stroke-width="1.2" fill="none" stroke-linejoin="round"/><path d="M5.5 1.5V7" stroke="#858585" stroke-width="1.2"/><path d="M2 10.5H8V13.5A3 3 0 0 1 2 13.5ZM3 10A2 2 0 0 1 7 10M0.8 10L2 11M9.2 10L8 11M0.8 13H2M8 13H9.2M1 16.5L2.3 15.3M9 16.5L7.7 15.3M5 10.5V16" stroke="#858585" stroke-width="1.1" fill="none"/></svg>
<svg class="a" style="left:422px;top:166px" width="20" height="20" viewBox="0 0 20 20"><path d="M1.5 7.5H7.5V13.5H1.5ZM7.5 7.5V13.5H13.5V19.5H7.5V13.5M1.5 13.5V19.5H7.5M10 1.5H16V7.5H10Z" stroke="#858585" stroke-width="1.2" fill="none"/><circle cx="15.5" cy="15" r="5" fill="#3a5fcf"/><path d="M14.4 13.4L15.9 12.3V17.6" stroke="#fff" stroke-width="1.2" fill="none"/></svg>
<svg class="a" style="left:422px;top:200.5px" width="19" height="17" viewBox="0 0 19 17"><path d="M9 12.5H1.5V1.5H15.5V7" stroke="#858585" stroke-width="1.2" fill="none"/><path d="M4 15H8" stroke="#858585" stroke-width="1.2"/><circle cx="14" cy="12" r="4" stroke="#858585" stroke-width="1.2" fill="none"/><path d="M12.3 13.7L15.7 10.3M13.5 10.3H15.7V12.5" stroke="#858585" stroke-width="1" fill="none"/></svg>
<svg class="a" style="left:424.5px;top:235px" width="14" height="16.5" viewBox="0 0 15 25" preserveAspectRatio="none"><path d="M4.5 1H10.5M5.5 1V9L1.2 21.5C1 22.5 1.5 23.5 2.5 23.5H12.5C13.5 23.5 14 22.5 13.8 21.5L9.5 9V1M3 15.5H12" stroke="#858585" stroke-width="1.2" fill="none" stroke-linejoin="round"/></svg>
<svg class="a" style="left:423px;top:271px" width="18" height="18" viewBox="0 0 10 10"><path d="M4.8 0.5C2.8 0.5 2.9 1.4 2.9 1.4V2.4H4.9V2.7H2.1C2.1 2.7 0.7 2.5 0.7 4.8C0.7 7 1.9 7 1.9 7H2.8V5.9C2.8 5.9 2.7 4.7 4 4.7H6C6 4.7 7.1 4.7 7.1 3.6V1.7C7.1 1.7 7.3 0.5 4.8 0.5Z" fill="#858585"/><path d="M5.2 9.5C7.2 9.5 7.1 8.6 7.1 8.6V7.6H5.1V7.3H7.9C7.9 7.3 9.3 7.5 9.3 5.2C9.3 3 8.1 3 8.1 3H7.2V4.1C7.2 4.1 7.3 5.3 6 5.3H4C4 5.3 2.9 5.3 2.9 6.4V8.3C2.9 8.3 2.7 9.5 5.2 9.5Z" fill="#858585"/><circle cx="3.8" cy="1.5" r="0.4" fill="#1b1b1b"/><circle cx="6.2" cy="8.5" r="0.4" fill="#1b1b1b"/></svg>

<!-- jumper window -->
<div class="a" style="left:317.5px;top:300.7px;width:485px;height:161px;border-radius:5px 7px 0 0;box-shadow:0 0 0 1px #141414, 0 1px 7px rgba(0,0,0,0.3)"></div>
<div class="a" style="left:317.5px;top:300.7px;width:485px;height:161px;overflow:hidden;border-radius:5px 7px 0 0">
  <div class="a" style="left:0;top:0;width:485px;height:22px;background:#2b2b2b"></div>
  <div class="a" style="left:0;top:21.2px;width:485px;height:1px;background:#151515"></div>
  <div class="a" style="left:0;top:22px;width:485px;height:140px;background:#ac3232"></div>
  <div class="a" style="left:9.5px;top:31.8px;width:476px;height:129px;background:#808080"></div>
  
  <div class="t" style="left:227.5px;top:7.5px;font-size:10px;font-weight:bold;color:#f2f2f2;letter-spacing:-0.6px">jumper</div>
  <div class="a" style="left:451px;top:12.3px;width:6px;height:1.5px;background:#e8e8e8"></div>
  <svg class="a" style="left:470.5px;top:7.5px" width="7" height="7" viewBox="0 0 7 7"><path d="M0.7 0.7L6.3 6.3M6.3 0.7L0.7 6.3" stroke="#f0f0f0" stroke-width="1.5"/></svg>
</div>

</body></html>
